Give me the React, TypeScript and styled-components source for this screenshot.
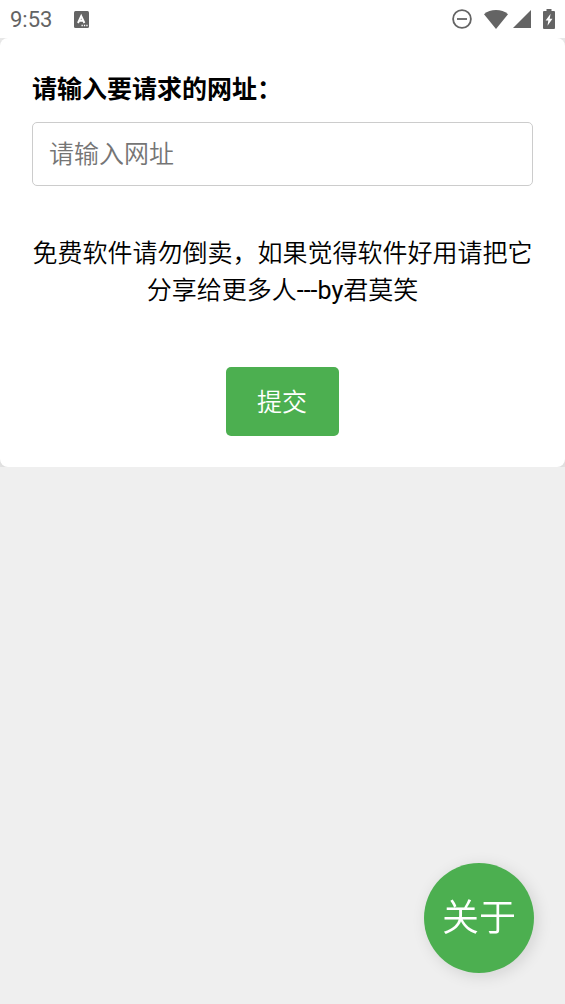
import React, { useState } from 'react';
import styled, { createGlobalStyle } from 'styled-components';

const GlobalStyle = createGlobalStyle`
  *, *::before, *::after { box-sizing: border-box; }
  body {
    margin: 0;
    background: #efefef;
    color: #000;
    font-family: Roboto, "Noto Sans CJK SC", sans-serif;
    font-size: 25px;
    font-weight: 350;
    line-height: 38px;
  }
  button, input { font: inherit; }
`;

const StatusBar = styled.header`
  position: relative;
  z-index: 1;
  display: flex;
  align-items: center;
  justify-content: space-between;
  height: 38px;
  padding: 0 10px;
  background: #fff;
  color: #646464;
`;

const StatusGroup = styled.div<{ $gap: number }>`
  display: flex;
  align-items: center;
  gap: ${(p) => p.$gap}px;

  svg { display: block; }
`;

const Clock = styled.time`
  padding-top: 2px;
  font-size: 22px;
  font-weight: 400;
  line-height: 36px;
`;

const Card = styled.form`
  display: flex;
  flex-direction: column;
  padding: 33px 32px 31px;
  border-radius: 8px;
  background: #fff;
  box-shadow: 0 3px 16px rgba(0, 0, 0, 0.16);
`;

const Label = styled.label`
  margin-bottom: 13px;
  font-weight: 700;
`;

const UrlInput = styled.input`
  width: 100%;
  height: 64px;
  padding: 0 16px;
  border: 1px solid #ccc;
  border-radius: 5px;
  background: #fff;
  color: #000;
  outline: none;

  &::placeholder { color: #757575; opacity: 1; }
`;

const Notice = styled.p`
  margin: 49px 0 58px;
  text-align: center;
  line-height: 37px;
`;

const Phrase = styled.span`
  display: inline-block;
`;

const Latin = styled.span`
  font-weight: 400;
`;

const SubmitButton = styled.button`
  align-self: center;
  height: 69px;
  padding: 2px 32px 0 31px;
  border: 0;
  border-radius: 5px;
  background: #4caf50;
  color: #fff;
  cursor: pointer;
`;

const AboutButton = styled.button`
  position: fixed;
  right: 31px;
  bottom: 31px;
  width: 110px;
  height: 110px;
  padding: 2px 0 0;
  border: 0;
  border-radius: 50%;
  background: #4caf50;
  color: #fff;
  font-size: 37px;
  box-shadow: 3px 3px 16px rgba(0, 0, 0, 0.12);
  cursor: pointer;
`;

const KeyboardIcon = () => (
  <svg width="15" height="17" viewBox="0 0 15 17" aria-hidden="true">
    <rect width="15" height="17" rx="1.5" fill="currentColor" />
    <path d="M4 12 7.200 5 10.400 12M5.200 9.700h4" fill="none" stroke="#fff" strokeWidth="1.9" />
    <path d="M7.5 14.5h1.3M9.9 14.5h1.3M12.3 14.5h1.3" stroke="#fff" strokeWidth="1.3" />
  </svg>
);

const DoNotDisturbIcon = () => (
  <svg width="20" height="20" viewBox="0 0 20 20" fill="none" stroke="currentColor" strokeWidth="1.8" aria-hidden="true">
    <circle cx="10" cy="10" r="8.9" />
    <path d="M5 10h10" />
  </svg>
);

const WifiIcon = () => (
  <svg width="24" height="19" viewBox="0 0 24 19" fill="currentColor" aria-hidden="true">
    <path d="M0 4.2C3.3 1.4 7.4 0 12 0s8.700 1.400 12 4.200L12 19z" />
  </svg>
);

const SignalIcon = () => (
  <svg width="18" height="18" viewBox="0 0 18 18" fill="currentColor" aria-hidden="true">
    <path d="M18 0v18H0z" />
  </svg>
);

const BatteryIcon = () => (
  <svg width="12" height="20" viewBox="0 0 12 20" fill="currentColor" aria-hidden="true">
    <path d="M3.500 0h5v2H11a1 1 0 0 1 1 1v16a1 1 0 0 1-1 1H1a1 1 0 0 1-1-1V3a1 1 0 0 1 1-1h2.500z" />
    <path d="M7.600 4.800 2.600 11.400H5.300L4.500 16.800 9.500 9.800H6.700z" fill="#fff" />
  </svg>
);

const StatusIcons = styled(StatusGroup)`
  svg + svg { margin-left: 12px; }
  svg:nth-child(3) { margin-left: 5px; }
`;

export default function App() {
  const [url, setUrl] = useState('');

  return (
    <>
      <GlobalStyle />
      <StatusBar>
        <StatusGroup $gap={22}>
          <Clock>9:53</Clock>
          <KeyboardIcon />
        </StatusGroup>
        <StatusIcons $gap={0}>
          <DoNotDisturbIcon />
          <WifiIcon />
          <SignalIcon />
          <BatteryIcon />
        </StatusIcons>
      </StatusBar>
      <main>
        <Card onSubmit={(e) => e.preventDefault()}>
          <Label htmlFor="url">请输入要请求的网址：</Label>
          <UrlInput
            id="url"
            type="text"
            placeholder="请输入网址"
            value={url}
            onChange={(e) => setUrl(e.target.value)}
          />
          <Notice>
            免费软件请勿倒卖，如果觉得软件好用请把它
            <Phrase>
              分享给更多人<Latin>---by</Latin>君莫笑
            </Phrase>
          </Notice>
          <SubmitButton type="submit">提交</SubmitButton>
        </Card>
      </main>
      <AboutButton type="button">关于</AboutButton>
    </>
  );
}
